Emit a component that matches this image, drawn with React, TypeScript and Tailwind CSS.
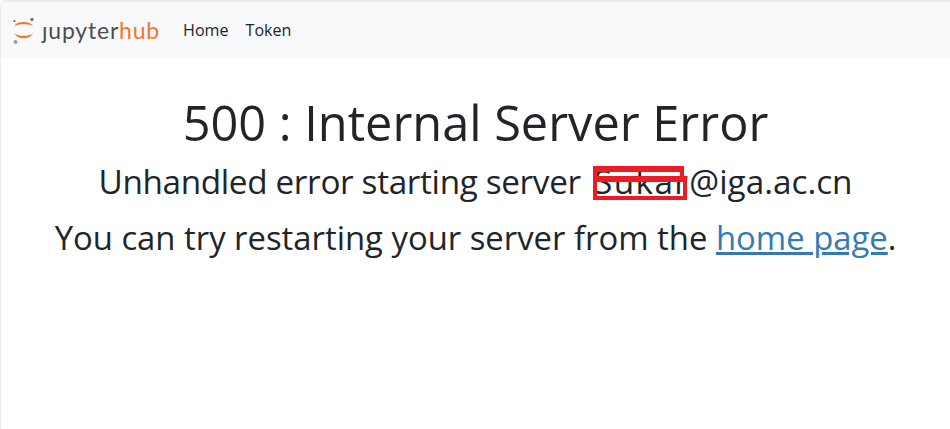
import React from "react";

const Logo = () => (
  <div className="flex items-center">
    <svg width="24" height="32" viewBox="0 0 24 32" className="-ml-[1px] shrink-0">
      <path d="M2.5 12C5 6.6 18 6.6 21 12C17.5 9.6 6 9.6 2.5 12Z" fill="#f37726" />
      <path d="M2.5 19.5C5.5 25.8 18 25.8 21 19.5C17.5 22.6 6 22.6 2.5 19.5Z" fill="#f37726" />
      <circle cx="20" cy="5.5" r="1.7" fill="#767677" />
      <circle cx="2.5" cy="7" r="1.1" fill="#616262" />
      <circle cx="3.5" cy="28" r="2" fill="#9e9e9e" />
    </svg>
    <span className="ml-[6px] font-['Lato',sans-serif] text-[23px] leading-none tracking-[0.8px] text-[#4e4e4e]">
      ȷupyter<span className="text-[#f37726]">hub</span>
    </span>
  </div>
);

export default function App() {
  return (
    <div className="h-[429px] w-[950px] overflow-hidden bg-white font-['Open_Sans','Noto_Sans',sans-serif] text-[#212529]">
      <div className="h-full rounded-tl-[6px] border-t-2 border-l border-[#e9ebee]">
        <nav className="flex h-[56px] items-center bg-[#f8f9fa] pl-[12px]">
          <Logo />
          <a className="ml-[23px] text-[16.1px]">Home</a>
          <a className="ml-[17px] text-[16.1px]">Token</a>
        </nav>
        <main className="flex flex-col items-center text-center">
          <h1 className="mt-[35px] text-[48.7px] leading-[1.2]">500 : Internal Server Error</h1>
          <p className="mt-[11px] text-[33.3px] leading-[1.2]">
            <span className="tracking-[-0.35px]">Unhandled error starting server </span>
            <span className="relative ml-[5px] tracking-[1.4px]">
              Sukar
              {/* hand drawn redaction on top of the name */}
              <span className="absolute -left-[1px] right-[2px] top-[8px] bottom-[4px] flex flex-col">
                <span className="mr-[3px] h-[10px] border-x-4 border-t-[6px] border-[#ed1c24]" />
                <span className="flex-1 border-x-4 border-t-[6px] border-b-[4px] border-[#ed1c24]" />
              </span>
            </span>
            @iga.ac.cn
          </p>
          <p className="mt-[16px] text-[32.85px] leading-[1.2]">
            You can try restarting your server from the{" "}
            <a className="text-[#337ab7] underline decoration-[2.5px]">home page</a>.
          </p>
        </main>
      </div>
    </div>
  );
}
